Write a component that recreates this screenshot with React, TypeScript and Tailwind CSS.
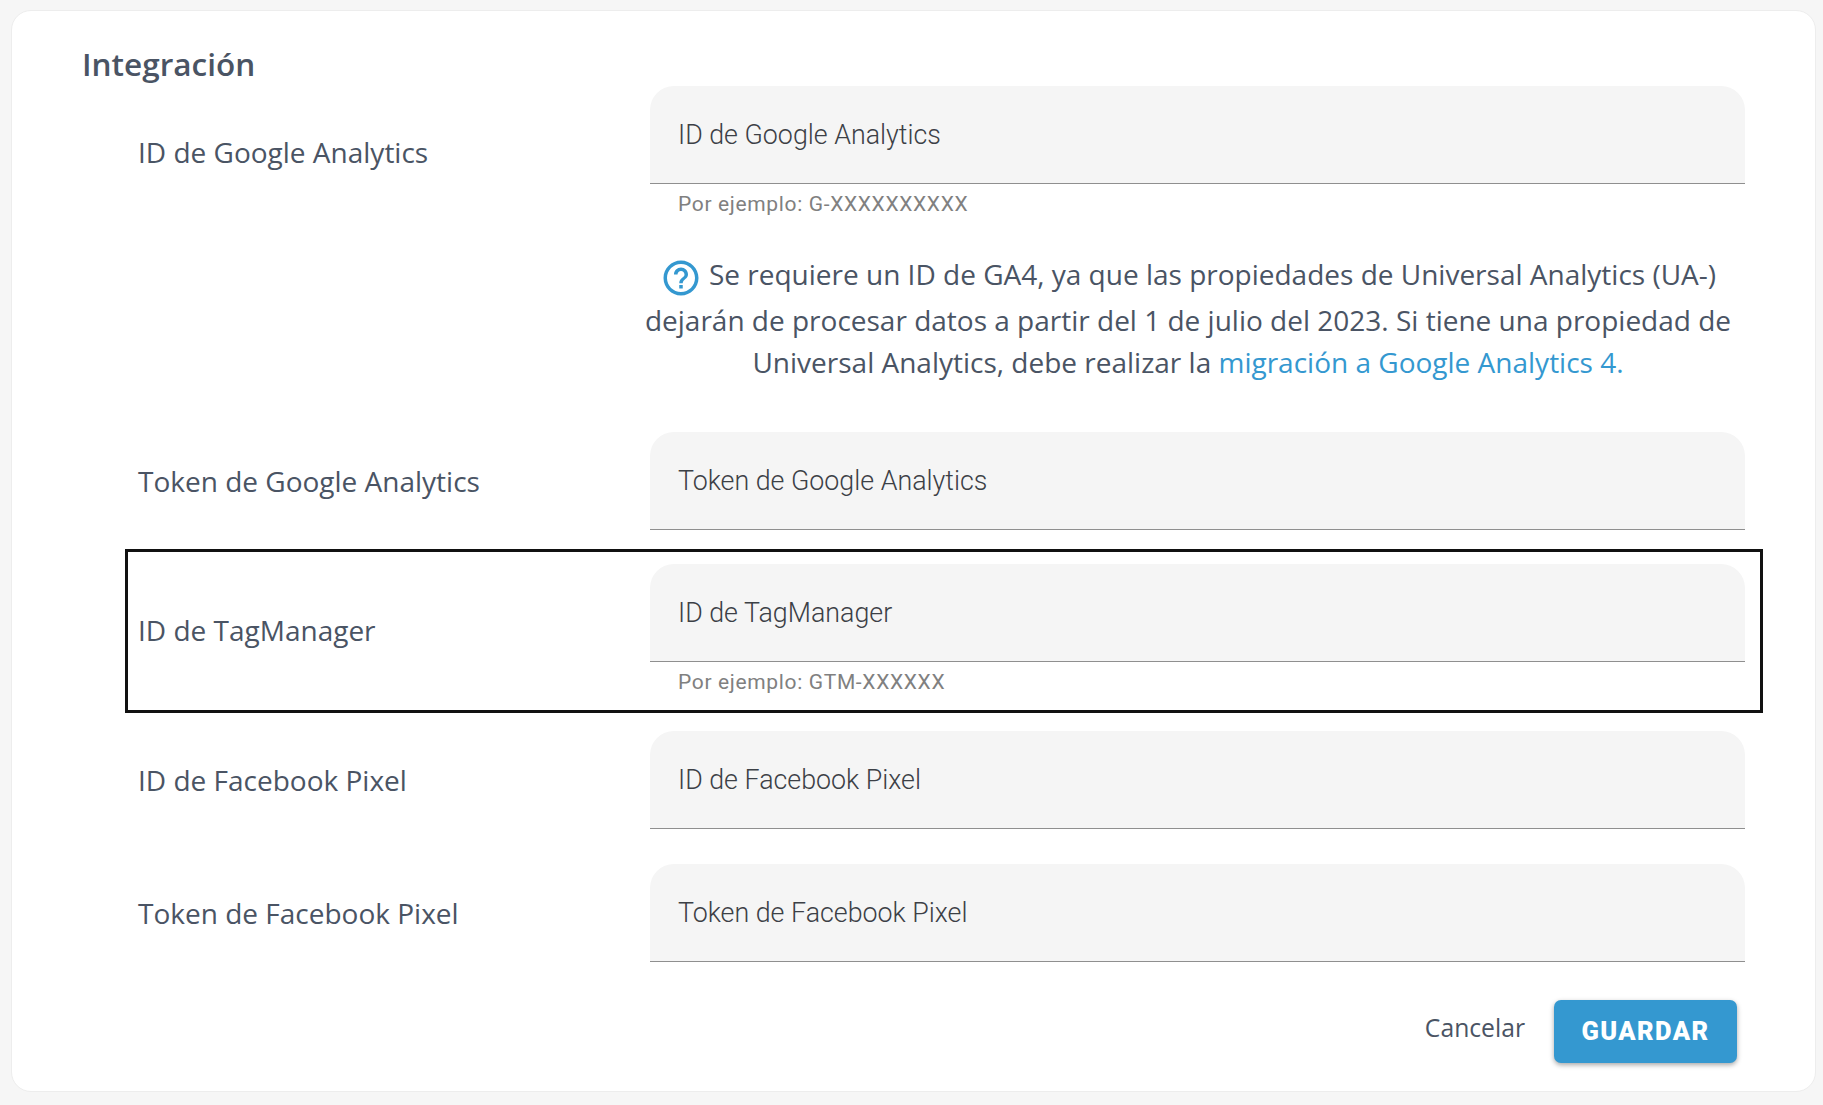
const HelpIcon = (): JSX.Element => (
  <svg viewBox="0 0 24 24" className="mr-[7px] inline-block h-[42px] w-[42px] fill-[#3498d0] align-[-14px]" aria-hidden="true">
    <path d="M11 18h2v-2h-2v2zm1-16C6.48 2 2 6.48 2 12s4.48 10 10 10 10-4.48 10-10S17.52 2 12 2zm0 18c-4.41 0-8-3.59-8-8s3.59-8 8-8 8 3.59 8 8-3.59 8-8 8zm0-14c-2.21 0-4 1.79-4 4h2c0-1.1.9-2 2-2s2 .9 2 2c0 2-3 1.75-3 5h2c0-2.25 3-2.5 3-5 0-2.21-1.79-4-4-4z" />
  </svg>
);

const Field = ({ label, hint }: { label: string; hint?: string }): JSX.Element => (
  <div className="w-[1095px] shrink-0">
    <div className="flex h-[98px] items-center rounded-t-[24px] border-b border-[#8f8f8f] bg-[#f5f5f5] px-[28px] pt-[2px] font-['Roboto'] text-[26.8px] font-light text-[#3c4046]">
      {label}
    </div>
    {hint && (
      <p className="px-[28px] pt-[8px] font-['Roboto'] text-[21px] leading-[24px] tracking-[0.65px] text-[#808080]">
        {hint}
      </p>
    )}
  </div>
);

const Row = ({ label, hint, className }: { label: string; hint?: string; className?: string }): JSX.Element => (
  <div className={`flex items-center border-[3px] border-transparent pl-[10px] ${className ?? ''}`}>
    <label className="w-[512px] shrink-0 text-[28px] text-[#4a5464]">{label}</label>
    <Field label={label} hint={hint} />
  </div>
);

export default function App(): JSX.Element {
  return (
    <div className="h-[1105px] overflow-hidden bg-[#f6f6f6] pt-[10px] pl-[11px] font-['Open_Sans',sans-serif]">
      <div className="h-[1082px] w-[1805px] rounded-[20px] border border-[#ededed] bg-white pl-[70px]">
        <h2 className="pt-[34px] text-[31.5px] leading-[38px] font-semibold text-[#4a5464]">Integración</h2>

        <div className="ml-[43px] w-[1638px]">
          {/* analytics row carries the GA4 note, so its label sits at the top */}
          <div className="flex items-start border-[3px] border-transparent pl-[10px]">
            <label className="w-[512px] shrink-0 pt-[45px] text-[28px] text-[#4a5464]">ID de Google Analytics</label>
            <div>
              <Field label="ID de Google Analytics" hint="Por ejemplo: G-XXXXXXXXXX" />
              <p className="mt-[37px] -ml-[7px] w-[1090px] text-center text-[28px] leading-[42px] text-[#4a5464]">
                <HelpIcon />
                Se requiere un ID de GA4, ya que las propiedades de Universal Analytics (UA-) dejarán de procesar datos a partir del 1 de julio del 2023. Si tiene una propiedad de Universal Analytics, debe realizar la{' '}
                <a className="text-[#3498d0]">migración a Google Analytics 4.</a>
              </p>
            </div>
          </div>

          <Row label="Token de Google Analytics" className="mt-[43px]" />

          <div className="mt-[16px] flex h-[164px] items-start border-[3px] border-[#111111] pt-[12px] pl-[10px]">
            <label className="w-[512px] shrink-0 pt-[45px] text-[28px] text-[#4a5464]">ID de TagManager</label>
            <Field label="ID de TagManager" hint="Por ejemplo: GTM-XXXXXX" />
          </div>

          <Row label="ID de Facebook Pixel" className="mt-[15px]" />
          <Row label="Token de Facebook Pixel" className="mt-[29px]" />
        </div>

        <div className="mt-[35px] flex w-[1655px] items-center justify-end gap-[29px]">
          <button className="mb-[7px] text-[24.7px] text-[#4a5464]">Cancelar</button>
          <button className="h-[63px] w-[183px] rounded-[7px] bg-[#3498d0] font-['Roboto'] text-[25.5px] font-black tracking-[1.4px] text-white shadow-[0_2px_5px_rgba(0,0,0,0.35)]">
            GUARDAR
          </button>
        </div>
      </div>
    </div>
  );
}
